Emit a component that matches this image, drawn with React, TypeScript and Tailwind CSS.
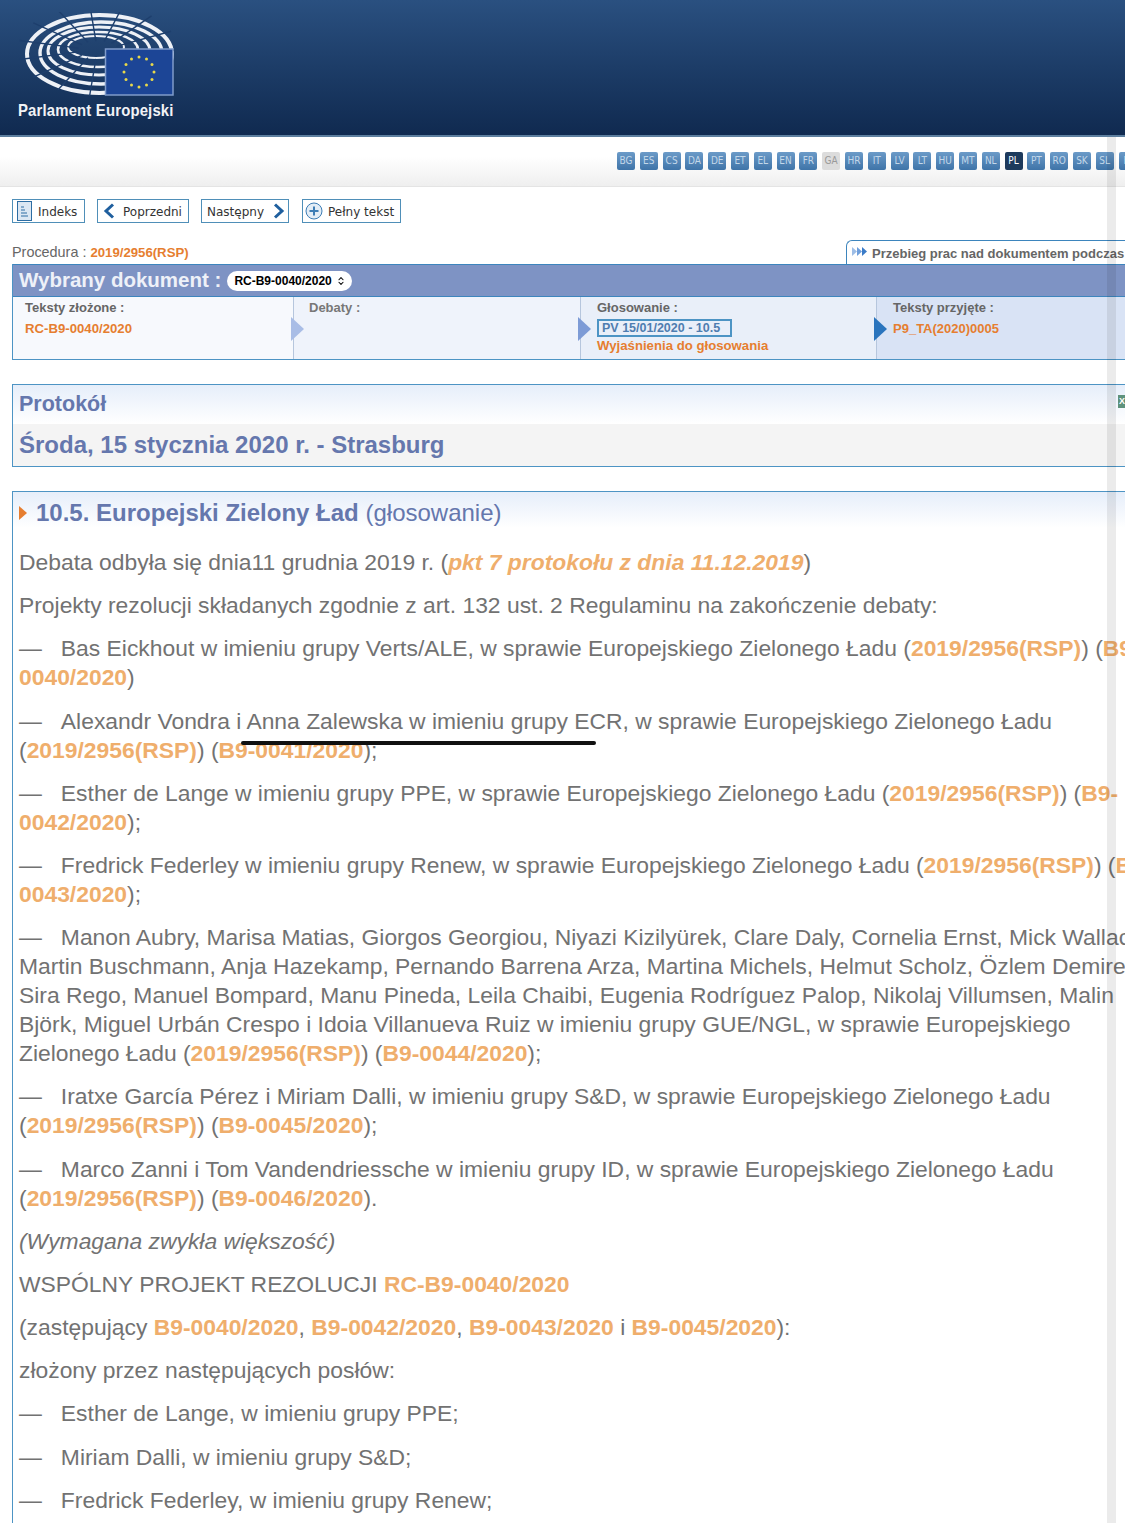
import type { ReactNode } from 'react';
import { ChevronsUpDown } from 'lucide-react';

const LANGS = ['BG','ES','CS','DA','DE','ET','EL','EN','FR','GA','HR','IT','LV','LT','HU','MT','NL','PL','PT','RO','SK','SL','FI'];
const SEATS = [0, 24, 48, 72, 96, 120, 144, 168, 192, 216, 240, 264, 288, 312, 336];

function Logo() {
  return (
    <svg width="156" height="86" viewBox="0 0 156 86" fill="none" stroke="#eef1f6">
      <ellipse cx="78" cy="35" rx="28" ry="11" strokeWidth="2" />
      <ellipse cx="80" cy="37.5" rx="40" ry="17.5" strokeWidth="2.6" />
      <ellipse cx="81" cy="39" rx="51" ry="24" strokeWidth="3" />
      <ellipse cx="83" cy="41" rx="61" ry="31" strokeWidth="3.4" />
      <ellipse cx="81.5" cy="42" rx="72.5" ry="39" strokeWidth="4" />
      {SEATS.map(deg => {
        const a = (deg * Math.PI) / 180;
        return <path key={deg} d={`M${80 + Math.cos(a) * 20} ${38 + Math.sin(a) * 9}L${80 + Math.cos(a) * 80} ${38 + Math.sin(a) * 46}`} stroke="#1e3f6d" strokeWidth="1.4" />;
      })}
      <rect x="87.5" y="37" width="67.5" height="46" fill="#1c4596" stroke="#7f9bc9" strokeWidth="1.5" />
      {Array.from({ length: 12 }).map((_, i) => {
        const a = (i / 12) * Math.PI * 2;
        return <circle key={i} cx={121 + Math.cos(a) * 15} cy={60 + Math.sin(a) * 15} r="1.5" fill="#e8d84a" stroke="none" />;
      })}
    </svg>
  );
}

function NavButton({ icon, label, right, cls }: { icon: ReactNode; label: string; right?: boolean; cls: string }) {
  return (
    <div className={`flex h-[24px] items-center border border-[#4f8fb8] font-['DejaVu_Sans'] text-[12px] text-[#333] ${cls}`}>
      {!right && icon}
      <span className="pt-[1px]">{label}</span>
      {right && icon}
    </div>
  );
}

function Chevron({ left }: { left?: boolean }) {
  return (
    <svg width="14" height="16" viewBox="0 0 14 16" fill="none" stroke="#1f5f9e" strokeWidth="3">
      <path d={left ? 'M11 1.5 4 8l7 6.5' : 'M3 1.5 10 8l-7 6.5'} />
    </svg>
  );
}

function Link({ children }: { children: ReactNode }) {
  return <b className="font-bold text-[#efae6c]">{children}</b>;
}

function Para({ children, cls }: { children: ReactNode; cls?: string }) {
  return <p className={`mb-[14.2px] whitespace-nowrap leading-[29px] ${cls ?? ''}`}>{children}</p>;
}

const Dash = () => <span className="mr-[19px]">—</span>;

function Step({ color }: { color: string }) {
  return (
    <div className="relative w-px bg-[#b6c6dd]">
      <svg className="absolute left-[-2px] top-[20px]" width="13" height="24" viewBox="0 0 13 24"><path d="M0 0l13 12L0 24z" fill={color} /></svg>
    </div>
  );
}

export default function App() {
  return (
    <div className="relative h-[1523px] w-[1125px] overflow-hidden bg-white font-['Liberation_Sans',Arial,sans-serif]">
      <header className="h-[137px] border-b-2 border-[#5d7f9f] bg-gradient-to-b from-[#2a5080] to-[#102a50] pl-[18px] pt-[12px]">
        <Logo />
        <div className="mt-[3px] origin-left scale-x-[0.875] text-[17px] font-bold leading-[20px] tracking-[0.2px] text-[#f1f3f6]">Parlament Europejski</div>
      </header>

      <div className="flex h-[50px] gap-[4.8px] overflow-hidden border-b border-[#e4e4e4] bg-gradient-to-b from-white from-40% to-[#efefef] pl-[617px] pt-[15px]">
        {LANGS.map(l => (
          <span key={l} className={`flex h-[18px] w-[18px] shrink-0 items-center justify-center rounded-[2px] font-['DejaVu_Sans_Condensed','DejaVu_Sans',sans-serif] text-[10px] leading-none ${l === 'PL' ? 'bg-[#1d3a5c] text-white' : l === 'GA' ? 'bg-[#dcdcdc] text-[#999]' : 'bg-gradient-to-b from-[#6c9bc8] to-[#3f74a8] text-[#c3d8ea]'}`}>{l}</span>
        ))}
      </div>

      <nav className="flex pl-[12px] pt-[12px]">
        <NavButton cls="w-[73px] pl-[4px] gap-[6px]" label="Indeks" icon={<svg width="15" height="20" viewBox="0 0 15 20"><rect x=".5" y=".5" width="14" height="19" fill="#dbe7f3" stroke="#2d6da3" /><path d="M4 6h3M4 9h4M4 12h6M4 15h7" stroke="#2d6da3" /></svg>} />
        <NavButton cls="ml-[12px] w-[92px] pl-[4px] gap-[7px]" label="Poprzedni" icon={<Chevron left />} />
        <NavButton cls="ml-[12px] w-[88px] pl-[5px] gap-[8px]" label="Następny" right icon={<Chevron />} />
        <NavButton cls="ml-[13px] w-[99px] pl-[2px] gap-[5px]" label="Pełny tekst" icon={<svg width="18" height="18" viewBox="0 0 18 18" fill="#e3edf6" stroke="#3d7db5"><circle cx="9" cy="9" r="8" /><path d="M9 4.5v9M4.5 9h9" strokeWidth="2" /></svg>} />
      </nav>

      <div className="mt-[10px] flex h-[31px] items-end justify-between pl-[12px]">
        <div className="pb-[1px] text-[14.4px] leading-[20px] text-[#666]">Procedura : <b className="text-[13.2px] text-[#e67e30]">2019/2956(RSP)</b></div>
        <div className="ml-auto flex h-[24px] w-[279px] items-start overflow-hidden whitespace-nowrap rounded-tl-[6px] border-l border-t border-[#3d85bd] pl-[5px] pt-[3px] text-[13px] font-bold text-[#666]">
          <svg className="mr-[5px] mt-[3px] shrink-0" width="15" height="9" viewBox="0 0 15 9"><path d="M0 0l5 4.5L0 9z" fill="#9dbde6" /><path d="M5 0l5 4.5L5 9z" fill="#6f9fdc" /><path d="M10 0l5 4.5-5 4.5z" fill="#3b7cc8" /></svg>
          Przebieg prac nad dokumentem podczas sesji
        </div>
      </div>

      <section className="ml-[12px] border-b border-l border-[#4d94c4]">
        <div className="flex h-[33px] items-center border-y border-[#3d85bd] bg-[#7e93c4] pl-[6px]">
          <span className="text-[20.5px] font-bold text-[#eef1f8]">Wybrany dokument :</span>
          <span className="ml-[6px] flex h-[20px] w-[125px] items-center rounded-full bg-white pl-[7px] text-[12px] font-bold text-black">RC-B9-0040/2020<ChevronsUpDown className="ml-[4px] h-[10px] w-[10px]" strokeWidth={2.5} /></span>
        </div>
        <div className="flex h-[62px] text-[13px] font-bold leading-[17px]">
          <div className="w-[280px] bg-[#f7f9fd] pl-[12px] pt-[2px]">
            <div className="text-[#666]">Teksty złożone :</div>
            <div className="mt-[4px] text-[13.2px] text-[#e67e30]">RC-B9-0040/2020</div>
          </div>
          <Step color="#a9bde6" />
          <div className="w-[286px] bg-[#eff3fb] pl-[15px] pt-[2px] text-[#777]">Debaty :</div>
          <Step color="#7d9bd6" />
          <div className="w-[295px] bg-[#e9eff9] pl-[16px] pt-[2px]">
            <div className="text-[#666]">Głosowanie :</div>
            <div className="mt-[3px] flex h-[18px] w-[135px] items-center border-2 border-[#4d94c4] pl-[3px] text-[12.5px] text-[#4f7db0]">PV 15/01/2020 - 10.5</div>
            <div className="text-[13.2px] text-[#e67e30]">Wyjaśnienia do głosowania</div>
          </div>
          <Step color="#2a74bd" />
          <div className="flex-1 bg-[#d9e3f5] pl-[16px] pt-[2px]">
            <div className="text-[#666]">Teksty przyjęte :</div>
            <div className="mt-[4px] text-[#e67e30]">P9_TA(2020)0005</div>
          </div>
        </div>
      </section>

      <section className="relative ml-[12px] mt-[24px] h-[83px] border-y border-l border-[#4d94c4] font-bold text-[#6577ad]">
        <div className="h-[39px] bg-gradient-to-b from-[#e6eefa] to-white pl-[6px] pt-[6px] text-[21.5px] leading-[27px]">Protokół</div>
        <div className="h-[42px] bg-[#f4f4f4] pl-[6px] pt-[7px] text-[24px] leading-[28px]">Środa, 15 stycznia 2020 r. - Strasburg</div>
        <div className="absolute right-[-1px] top-[10px] flex h-[13px] w-[8px] items-center justify-center overflow-hidden bg-[#5f927c] text-[9px] leading-none text-white">X</div>
      </section>

      <section className="ml-[12px] mt-[24px] h-[1032px] border-l border-t border-[#4d94c4] text-[22.86px] text-[#727272]">
        <h2 className="mb-[20px] flex items-center bg-gradient-to-b from-[#e6eefa] to-white pl-[6px] pt-[6px] text-[24px] font-normal leading-[30px] text-[#6577ad]">
          <span className="mr-[9px] h-0 w-0 border-y-[7px] border-l-[8px] border-y-transparent border-l-[#e67e30]" />
          <b>10.5. Europejski Zielony Ład</b>&nbsp;<span>(głosowanie)</span>
        </h2>
        <div className="pl-[6px]">
          <Para>Debata odbyła się dnia11 grudnia 2019 r. (<b className="italic text-[#efae6c]">pkt 7 protokołu z dnia 11.12.2019</b>)</Para>
          <Para>Projekty rezolucji składanych zgodnie z art. 132 ust. 2 Regulaminu na zakończenie debaty:</Para>
          <Para><Dash />Bas Eickhout w imieniu grupy Verts/ALE, w sprawie Europejskiego Zielonego Ładu (<Link>2019/2956(RSP)</Link>) (<Link>B9-</Link><br /><Link>0040/2020</Link>)</Para>
          <Para><Dash />Alexandr Vondra i Anna Zalewska w imieniu grupy ECR, w sprawie Europejskiego Zielonego Ładu<br />(<Link>2019/2956(RSP)</Link>) (<Link>B9-0041/2020</Link>);</Para>
          <Para><Dash />Esther de Lange w imieniu grupy PPE, w sprawie Europejskiego Zielonego Ładu (<Link>2019/2956(RSP)</Link>) (<Link>B9-</Link><br /><Link>0042/2020</Link>);</Para>
          <Para><Dash />Fredrick Federley w imieniu grupy Renew, w sprawie Europejskiego Zielonego Ładu (<Link>2019/2956(RSP)</Link>) (<Link>B9-</Link><br /><Link>0043/2020</Link>);</Para>
          <Para><Dash />Manon Aubry, Marisa Matias, Giorgos Georgiou, Niyazi Kizilyürek, Clare Daly, Cornelia Ernst, Mick Wallace,<br />Martin Buschmann, Anja Hazekamp, Pernando Barrena Arza, Martina Michels, Helmut Scholz, Özlem Demirel,<br />Sira Rego, Manuel Bompard, Manu Pineda, Leila Chaibi, Eugenia Rodríguez Palop, Nikolaj Villumsen, Malin<br />Björk, Miguel Urbán Crespo i Idoia Villanueva Ruiz w imieniu grupy GUE/NGL, w sprawie Europejskiego<br />Zielonego Ładu (<Link>2019/2956(RSP)</Link>) (<Link>B9-0044/2020</Link>);</Para>
          <Para><Dash />Iratxe García Pérez i Miriam Dalli, w imieniu grupy S&amp;D, w sprawie Europejskiego Zielonego Ładu<br />(<Link>2019/2956(RSP)</Link>) (<Link>B9-0045/2020</Link>);</Para>
          <Para><Dash />Marco Zanni i Tom Vandendriessche w imieniu grupy ID, w sprawie Europejskiego Zielonego Ładu<br />(<Link>2019/2956(RSP)</Link>) (<Link>B9-0046/2020</Link>).</Para>
          <Para cls="italic">(Wymagana zwykła większość)</Para>
          <Para>WSPÓLNY PROJEKT REZOLUCJI <Link>RC-B9-0040/2020</Link></Para>
          <Para>(zastępujący <Link>B9-0040/2020</Link>, <Link>B9-0042/2020</Link>, <Link>B9-0043/2020</Link> i <Link>B9-0045/2020</Link>):</Para>
          <Para>złożony przez następujących posłów:</Para>
          <Para><Dash />Esther de Lange, w imieniu grupy PPE;</Para>
          <Para><Dash />Miriam Dalli, w imieniu grupy S&amp;D;</Para>
          <Para><Dash />Fredrick Federley, w imieniu grupy Renew;</Para>
        </div>
      </section>

      {/* pen stroke drawn on the screenshot */}
      <div className="absolute left-[241px] top-[741px] h-[4px] w-[355px] rounded-full bg-[#111]" />
      {/* overlay scrollbar */}
      <div className="absolute bottom-0 right-[9px] top-[137px] w-[9px] bg-black/[0.08]" />
    </div>
  );
}
